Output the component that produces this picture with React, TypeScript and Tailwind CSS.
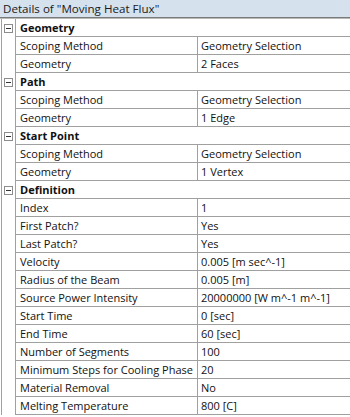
type Row = { label: string; value?: string; header?: boolean };

const rows: Row[] = [
  { label: "Geometry", header: true },
  { label: "Scoping Method", value: "Geometry Selection" },
  { label: "Geometry", value: "2 Faces" },
  { label: "Path", header: true },
  { label: "Scoping Method", value: "Geometry Selection" },
  { label: "Geometry", value: "1 Edge" },
  { label: "Start Point", header: true },
  { label: "Scoping Method", value: "Geometry Selection" },
  { label: "Geometry", value: "1 Vertex" },
  { label: "Definition", header: true },
  { label: "Index", value: "1" },
  { label: "First Patch?", value: "Yes" },
  { label: "Last Patch?", value: "Yes" },
  { label: "Velocity", value: "0.005 [m sec^-1]" },
  { label: "Radius of the Beam", value: "0.005 [m]" },
  { label: "Source Power Intensity", value: "20000000 [W m^-1 m^-1]" },
  { label: "Start Time", value: "0 [sec]" },
  { label: "End Time", value: "60 [sec]" },
  { label: "Number of Segments", value: "100" },
  { label: "Minimum Steps for Cooling Phase", value: "20" },
  { label: "Material Removal", value: "No" },
  { label: "Melting Temperature", value: "800 [C]" },
];

function Collapse() {
  return (
    <div className="w-[9px] h-[9px] border border-[#8c8c8c] bg-white flex items-center justify-center">
      <div className="w-[5px] h-px bg-[#333]" />
    </div>
  );
}

export default function App() {
  return (
    <div
      className="w-[350px] h-[417px] bg-white text-[11px] text-[#111] overflow-hidden"
      style={{ fontFamily: '"Open Sans", "Noto Sans", sans-serif' }}
    >
      <div className="h-[17px] bg-[#d5e1ed] pl-[3px] leading-[17px] text-[11.6px] text-[#1a1a1a]">
        Details of "Moving Heat Flux"
      </div>
      <div className="h-px bg-[#7a7a7a]" />
      <div className="h-px bg-[#b9b9b9]" />
      <div className="flex">
        <div className="w-[15px] shrink-0 flex flex-col border-l border-[#a0a0a0] ml-[1px] border-r">
          {rows.map((r, i) => (
            <div key={i} className="h-[18px] flex items-center justify-center pr-[1px]">
              {r.header && <Collapse />}
            </div>
          ))}
        </div>
        <div className="flex-1 flex flex-col">
          {rows.map((r, i) => (
            <div key={i} className="h-[18px] flex border-b border-[#a0a0a0]">
              {r.header ? (
                <div className="pl-[4px] font-bold leading-[17px]">{r.label}</div>
              ) : (
                <>
                  <div className="w-[182px] shrink-0 pl-[4px] leading-[17px] whitespace-nowrap overflow-hidden border-r border-[#a0a0a0]">
                    {r.label}
                  </div>
                  <div className="flex-1 pl-[3px] leading-[17px] whitespace-nowrap">{r.value}</div>
                </>
              )}
            </div>
          ))}
        </div>
      </div>
    </div>
  );
}
